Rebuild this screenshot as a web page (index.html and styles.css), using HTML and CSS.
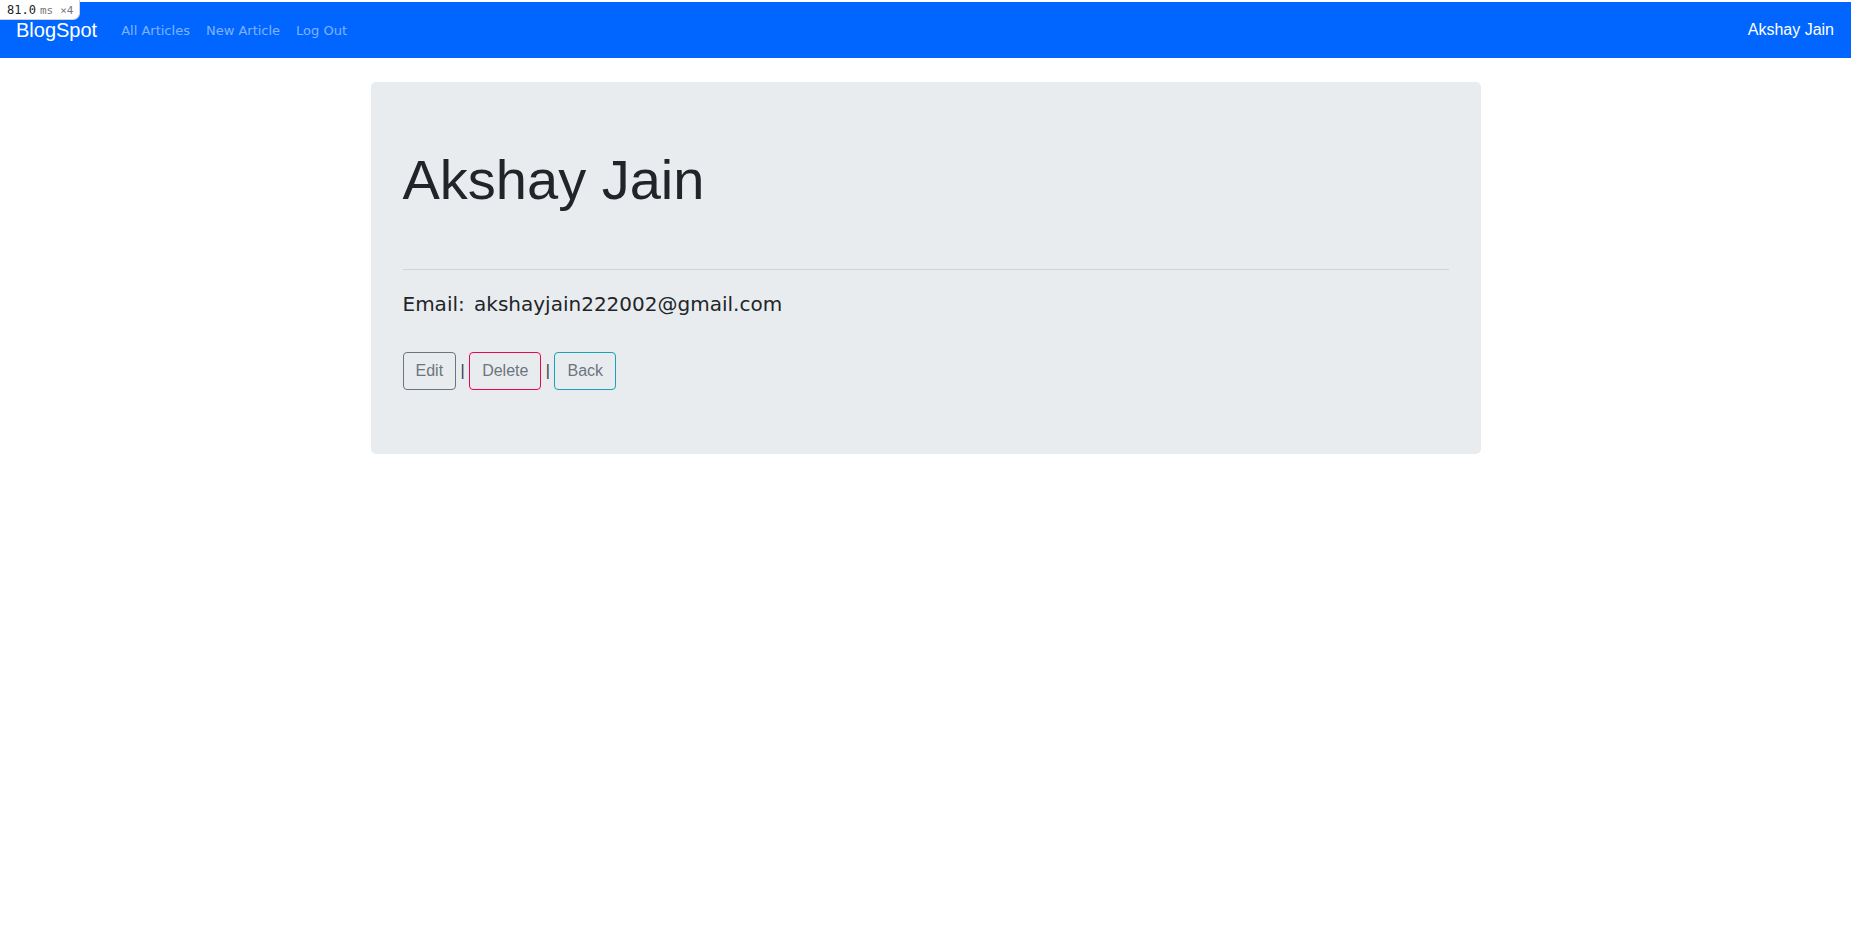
FILE: index.html
```html
<!DOCTYPE html>
<html lang="en">
<head>
<meta charset="utf-8">
<title>BlogSpot</title>
<link rel="stylesheet" href="styles.css">
</head>
<body>
<div class="perf-badge"><span class="perf-value">81.0</span><span class="perf-unit">ms</span><span class="perf-count">×4</span></div>
<nav class="navbar">
  <a class="brand" href="#">BlogSpot</a>
  <ul class="nav-links">
    <li><a href="#">All Articles</a></li>
    <li><a href="#">New Article</a></li>
    <li><a href="#">Log Out</a></li>
  </ul>
  <span class="nav-user">Akshay Jain</span>
</nav>
<main class="container">
  <section class="jumbotron">
    <h1 class="display">Akshay Jain</h1>
    <hr class="divider">
    <p class="lead">Email: akshayjain222002@gmail.com</p>
    <div class="actions"><a class="btn btn-edit" href="#">Edit</a> <span class="sep">|</span> <a class="btn btn-delete" href="#">Delete</a> <span class="sep">|</span> <a class="btn btn-back" href="#">Back</a></div>
  </section>
</main>
</body>
</html>
```
FILE: styles.css
```css
* { box-sizing: border-box; }
html, body { margin: 0; padding: 0; background: #fff; }
body {
  font-family: "DejaVu Sans", sans-serif;
  color: #212529;
  padding-top: 2px;
}
.perf-badge {
  position: absolute;
  top: 0;
  left: 0;
  width: 80px;
  height: 20px;
  background: #fff;
  border-right: 1px solid #d0d0d0;
  border-bottom: 1px solid #d0d0d0;
  border-bottom-right-radius: 7px;
  display: flex;
  align-items: baseline;
  padding: 3px 0 0 7px;
  font-family: "DejaVu Sans Mono", monospace;
  z-index: 10;
}
.perf-value { font-size: 12px; color: #222; }
.perf-unit { font-size: 11px; color: #777; margin-left: 4px; }
.perf-count { font-size: 11px; color: #777; margin-left: 7px; }
.navbar {
  display: flex;
  align-items: center;
  height: 56px;
  padding: 8px 17px 8px 16px;
  background: #0066ff;
}
.brand {
  font-family: "Liberation Sans", Arial, sans-serif;
  font-size: 20px;
  line-height: 30px;
  padding: 5px 0;
  color: #fff;
  text-decoration: none;
  margin-right: 16px;
}
.nav-links {
  display: flex;
  list-style: none;
  margin: 0;
  padding: 0;
  flex: 1;
}
.nav-links a {
  display: block;
  padding: 8px 8px;
  font-size: 13px;
  color: rgba(255, 255, 255, 0.5);
  text-decoration: none;
}
.nav-user {
  font-family: "Liberation Sans", Arial, sans-serif;
  font-size: 16px;
  color: #fff;
}
.container {
  width: 1140px;
  margin: 0 auto;
  padding: 24px 15px 0;
}
.jumbotron {
  background: #e9ecef;
  border-radius: 5px;
  padding: 64px 32px 64px;
}
.display {
  font-family: "Liberation Sans", Arial, sans-serif;
  font-size: 56px;
  font-weight: 300;
  line-height: 1.2;
  margin: 0;
  color: #212529;
}
.divider {
  border: 0;
  border-top: 1px solid rgba(0, 0, 0, 0.1);
  height: 0;
  margin: 56px 0 19px;
}
.lead {
  font-size: 20px;
  line-height: 30px;
  word-spacing: 3px;
  margin: 0 0 33px;
}
.actions {
  font-family: "Liberation Sans", Arial, sans-serif;
  font-size: 16px;
  line-height: 1.5;
}
.btn {
  display: inline-block;
  padding: 6px 12px;
  border: 1px solid #6c757d;
  border-radius: 4px;
  color: #6c757d;
  text-decoration: none;
  font-size: 16px;
  line-height: 24px;
}
.btn-edit { border-color: #6c757d; }
.btn-delete { border-color: #e8084a; }
.btn-back { border-color: #17a2b8; }
.sep { color: #343a40; }
```
